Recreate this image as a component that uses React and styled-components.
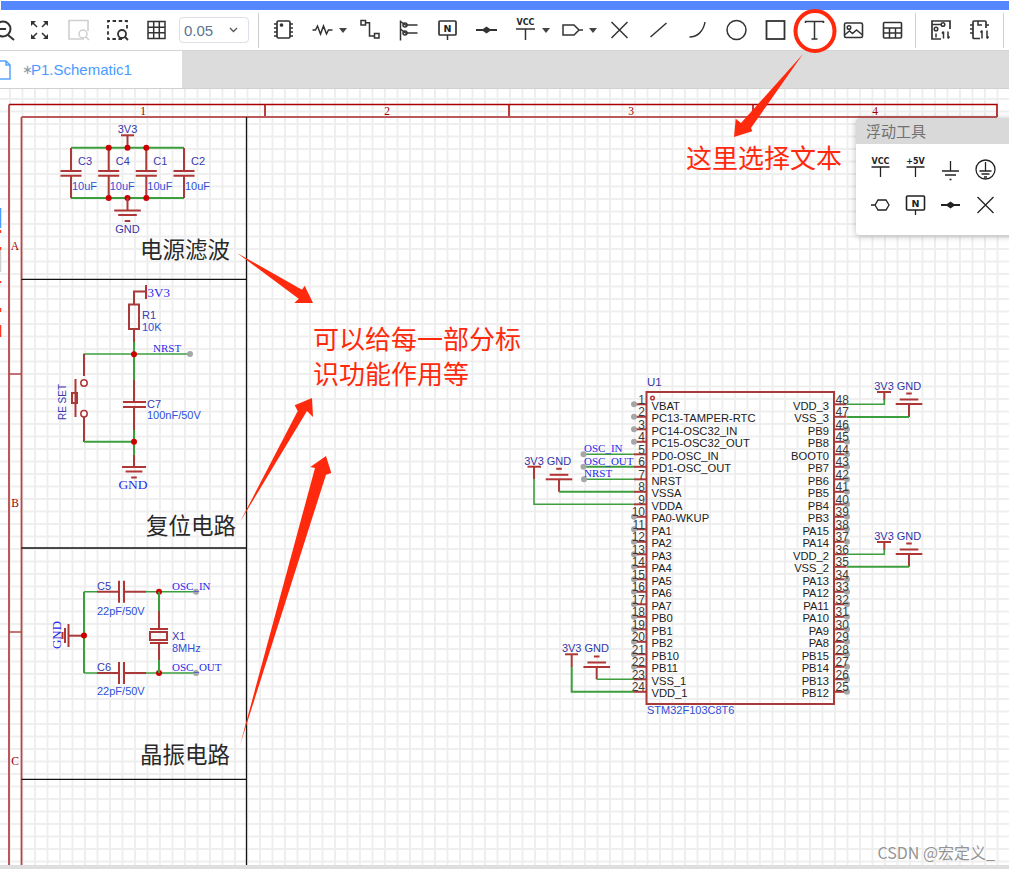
import React from "react";
import styled, { createGlobalStyle } from "styled-components";

const GlobalStyle = createGlobalStyle`
  html, body { margin: 0; padding: 0; background: #fff; }
  body { font-family: "Liberation Sans", "Noto Sans CJK SC", sans-serif; }
`;

const SANS = `"Liberation Sans", "Noto Sans CJK SC", sans-serif`;
const CJK = `"Noto Sans CJK SC", "Liberation Sans", sans-serif`;
const SERIF = `"Liberation Serif", serif`;

const LEFT_PINS = [
  "VBAT", "PC13-TAMPER-RTC", "PC14-OSC32_IN", "PC15-OSC32_OUT", "PD0-OSC_IN", "PD1-OSC_OUT",
  "NRST", "VSSA", "VDDA", "PA0-WKUP", "PA1", "PA2", "PA3", "PA4", "PA5", "PA6", "PA7",
  "PB0", "PB1", "PB2", "PB10", "PB11", "VSS_1", "VDD_1",
];
const RIGHT_PINS = [
  "VDD_3", "VSS_3", "PB9", "PB8", "BOOT0", "PB7", "PB6", "PB5", "PB4", "PB3", "PA15", "PA14",
  "VDD_2", "VSS_2", "PA13", "PA12", "PA11", "PA10", "PA9", "PA8", "PB15", "PB14", "PB13", "PB12",
];
const LEFT_WIRED = [5, 6, 7, 8, 9, 23, 24];
const RIGHT_WIRED = [48, 47, 36, 35];
const pinY = (i) => 404.3 + 12.5 * i;

const Page = styled.div`
  position: relative;
  width: 1009px;
  height: 869px;
  overflow: hidden;
  display: flex;
  flex-direction: column;
  background: #fff;
`;
const BlueBar = styled.div`
  height: 9px;
  margin: 1px 0 0 1px;
  background: #5588ff;
  flex: none;
`;
const Toolbar = styled.div`
  height: 40px;
  flex: none;
  display: flex;
  align-items: center;
  margin-left: -19.5px;
  border-bottom: 1px solid #d4d4d4;
  background: #fff;
`;
const Tool = styled.div`
  width: ${(p) => (p.$drop ? 47 : 39)}px;
  height: 40px;
  flex: none;
  display: flex;
  align-items: center;
`;
const ToolIcon = styled.svg`
  width: 39px;
  height: 26px;
  flex: none;
  fill: none;
  stroke: ${(p) => p.$color || "#333"};
  stroke-width: 1.5;
`;
const Caret = styled.span`
  width: 0;
  height: 0;
  margin-left: -3px;
  border-left: 4.5px solid transparent;
  border-right: 4.5px solid transparent;
  border-top: 5px solid #444;
`;
const SelectBox = styled.div`
  width: 70px;
  height: 26px;
  flex: none;
  margin-left: 3.5px;
  box-sizing: border-box;
  border: 1px solid #dcdfe6;
  border-radius: 4px;
  display: flex;
  align-items: center;
  justify-content: space-between;
  padding: 0 10px 0 4px;
  font-size: 15px;
  color: #5c7590;
`;
const Chevron = styled.svg`
  width: 9px;
  height: 6px;
  fill: none;
  stroke: #555;
  stroke-width: 1.3;
`;
const Divider = styled.div`
  width: 1px;
  height: 35px;
  flex: none;
  background: #cfcfcf;
  margin-left: ${(p) => p.$left}px;
  margin-right: ${(p) => p.$right}px;
`;
const TabBar = styled.div`
  height: 38px;
  flex: none;
  display: flex;
  background: #dcdcdc;
  border-bottom: 1px solid #d0d0d0;
  box-sizing: border-box;
`;
const Tab = styled.div`
  width: 182px;
  background: #fff;
  display: flex;
  align-items: center;
  font-size: 15px;
  color: #4a9bff;
`;
const DocIcon = styled.svg`
  width: 14px;
  height: 20px;
  margin-left: -3px;
  margin-right: 11px;
  fill: none;
  stroke: #55a5ff;
  stroke-width: 1.5;
`;
const Star = styled.span`
  width: 9px;
  color: #8a9aa8;
  font-family: "DejaVu Sans", sans-serif;
  font-size: 13px;
`;
const Canvas = styled.div`
  position: relative;
  flex: 1;
  overflow: hidden;
  background-color: #fff;
  background-image:
    linear-gradient(#eeeeee 2px, transparent 2px),
    linear-gradient(90deg, #eeeeee 2px, transparent 2px);
  background-size: 12.5px 12.5px;
  background-position: 9px 9px;
`;
const BottomStrip = styled.div`
  height: 4px;
  flex: none;
  background: #dedede;
`;
const Sheet = styled.svg`
  position: absolute;
  left: 0;
  top: 0;
  width: 1009px;
  height: 776px;
  font-family: ${SANS};
`;
const Overlay = styled.svg`
  position: absolute;
  left: 0;
  top: 0;
  width: 1009px;
  height: 869px;
  pointer-events: none;
`;

const Line = styled.path`
  fill: none;
  stroke: ${(p) => p.$c || "#a83a3a"};
  stroke-width: ${(p) => p.$w || 2};
`;
const Wire = styled.path`
  fill: none;
  stroke: #3d9e3d;
  stroke-width: ${(p) => p.$w || 1.6};
`;
const Plate = styled.path`
  fill: none;
  stroke: #b03636;
  stroke-width: 2;
`;
const Frame = styled.path`
  fill: none;
  stroke: ${(p) => p.$c || "#a80000"};
  stroke-width: ${(p) => p.$w || 1.5};
`;
const Body = styled.rect`
  fill: none;
  stroke: #a83a3a;
  stroke-width: 2;
`;
const Joint = styled.circle`
  fill: #cc0000;
`;
const PinEnd = styled.circle`
  fill: #a6a6a6;
`;
const Ring = styled.circle`
  fill: #fff;
  stroke: #b03636;
  stroke-width: 1.5;
`;
const Label = styled.text`
  fill: ${(p) => p.$c || "#2f50d8"};
  font-family: ${(p) => (p.$serif ? SERIF : SANS)};
  font-size: ${(p) => p.$s || 11}px;
  text-anchor: ${(p) => p.$anchor || "start"};
`;
const PinNum = styled.text`
  fill: #3a3a3a;
  font-size: 12px;
  text-anchor: ${(p) => p.$anchor};
`;
const PinName = styled.text`
  fill: #222;
  font-size: 11.2px;
  text-anchor: ${(p) => p.$anchor};
`;
const RulerText = styled.text`
  fill: #a00000;
  font-family: ${SERIF};
  font-size: 11.5px;
  text-anchor: middle;
`;

const Annotation = styled.div`
  position: absolute;
  left: ${(p) => p.$x}px;
  top: ${(p) => p.$y}px;
  font-family: ${CJK};
  font-size: ${(p) => p.$s}px;
  line-height: 35px;
  color: ${(p) => p.$c};
  white-space: nowrap;
`;
const FloatPanel = styled.div`
  position: absolute;
  left: 856px;
  top: 118px;
  width: 165px;
  height: 117px;
  background: #fff;
  border-radius: 4px;
  overflow: hidden;
  box-shadow: 0 1px 7px rgba(0, 0, 0, 0.28);
`;
const PanelHead = styled.div`
  height: 26px;
  padding-left: 10px;
  background: #d9d9d9;
  color: #707070;
  font-family: ${CJK};
  font-size: 15px;
  line-height: 26px;
`;
const PanelGrid = styled.div`
  display: grid;
  grid-template-columns: repeat(4, 35px);
  grid-auto-rows: 34px;
  padding: 10px 0 0 7px;
`;
const PanelIcon = styled.svg`
  width: 35px;
  height: 34px;
  fill: none;
  stroke: #222;
  stroke-width: 1.3;
`;
const IconText = styled.text`
  fill: #222;
  stroke: none;
  font-family: "DejaVu Sans", sans-serif;
  font-size: ${(p) => p.$s || 8}px;
  font-weight: 700;
  text-anchor: middle;
`;
const Watermark = styled.div`
  position: absolute;
  right: 14px;
  top: 842px;
  font-family: ${CJK};
  font-size: 16px;
  line-height: 20px;
  color: rgba(120, 120, 120, 0.8);
`;

// one ground symbol, plates getting shorter away from the lead
function Ground({ x, y, dir = 1, wide = 13.3 }) {
  return (
    <>
      <Plate d={`M${x - wide} ${y}H${x + wide}`} />
      <Plate d={`M${x - wide * 0.7} ${y + 4.5 * dir}H${x + wide * 0.7}`} />
      <Plate d={`M${x - 2.8} ${y + 10.5 * dir}H${x + 2.8}`} />
    </>
  );
}

function PowerPair({ baseY, pinA, pinB }) {
  return (
    <>
      <Label x={884} y={baseY - 2.5} $c="#3535a8" $anchor="middle">3V3</Label>
      <Label x={909} y={baseY - 2.5} $c="#3535a8" $anchor="middle">GND</Label>
      <Plate d={`M877 ${baseY}H891`} />
      <Line d={`M884.3 ${baseY}V${pinA - 4}`} />
      <Wire d={`M847 ${pinA}H884.3V${pinA - 5}`} />
      <Ground x={909} y={baseY + 12} dir={-1} />
      <Line d={`M909 ${baseY + 12}V${pinB}`} />
      <Wire d={`M847 ${pinB}H909`} $w={2} />
    </>
  );
}

function FilterBlock() {
  const caps = [
    { x: 71, name: "C3" },
    { x: 108.7, name: "C4" },
    { x: 146.3, name: "C1" },
    { x: 184, name: "C2" },
  ];
  return (
    <>
      <Label x={127.5} y={133} $c="#3535a8" $anchor="middle">3V3</Label>
      <Plate d="M121 135.3H134" />
      <Line d="M127.5 135V148" />
      <Wire d="M71 147.7H184M71 198H184" $w={2} />
      {caps.map((c) => (
        <g key={c.name}>
          <Line d={`M${c.x} 148V171M${c.x} 175.7V198`} />
          <Plate d={`M${c.x - 10.5} 171H${c.x + 10.5}M${c.x - 10.5} 175.7H${c.x + 10.5}`} />
          <Label x={c.x + 7} y={165} $c="#3a3ab0">{c.name}</Label>
          <Label x={c.x + 1} y={190}>10uF</Label>
        </g>
      ))}
      {[108.7, 127.5, 146.3].map((x) => (
        <g key={x}>
          <Joint cx={x} cy={147.7} r={3} />
          <Joint cx={x} cy={198} r={3} />
        </g>
      ))}
      <Line d="M127.5 198V210" />
      <Ground x={127.5} y={210.5} />
      <Label x={127.5} y={233} $c="#3535a8" $anchor="middle">GND</Label>
    </>
  );
}

function ResetBlock() {
  return (
    <>
      <Label x={147.5} y={297} $serif $s={13} $c="#2a2ae8">3V3</Label>
      <Plate d="M146 285V299" />
      <Line d="M146 291.5H134V304" />
      <Body x={129} y={304.5} width={10} height={24.5} />
      <Label x={142} y={319} $c="#3a3ab0">R1</Label>
      <Label x={142} y={331}>10K</Label>
      <Line d="M134 329V343" />
      <Wire d="M134 342V380" $w={2} />
      <Wire d="M83.5 354H190" />
      <Line d="M84 354V376" />
      <Joint cx={134} cy={354.3} r={3} />
      <PinEnd cx={190} cy={354} r={3} />
      <Label x={153} y={352} $serif $c="#2a2ae8">NRST</Label>
      <Line d="M134 380V402M134 407V430" />
      <Plate d="M123 402H146M123 407H146" />
      <Wire d="M134 430V455" $w={2} />
      <Line d="M134 455V467" />
      <Label x={147} y={408} $c="#3a3ab0">C7</Label>
      <Label x={147} y={419}>100nF/50V</Label>
      <Ring cx={84} cy={383} r={3.2} />
      <Ring cx={84} cy={413.7} r={3.2} />
      <Plate d="M75.5 379V417" />
      <Body x={72} y={393} width={5} height={10} />
      <Line d="M84 417V442" />
      <Wire d="M84 441.7H134" $w={2} />
      <Joint cx={134} cy={441.7} r={3} />
      <Ground x={134} y={467} wide={12} />
      <Label x={133} y={489} $serif $s={13.5} $c="#2a2ae8" $anchor="middle">GND</Label>
      <Label transform="translate(66 402) rotate(-90)" $s={10} $c="#3a3ab0" $anchor="middle">RE SET</Label>
    </>
  );
}

function CrystalBlock() {
  const rows = [
    { y: 591.7, cap: "C5", net: "OSC_IN", capY: 590, valY: 615 },
    { y: 673, cap: "C6", net: "OSC_OUT", capY: 671, valY: 695 },
  ];
  return (
    <>
      <Wire d="M84 591.7V673" $w={2} />
      {rows.map((r) => (
        <g key={r.cap}>
          <Wire d={`M84 ${r.y}H97M146 ${r.y}H196`} />
          <Line d={`M97 ${r.y}H119M124 ${r.y}H146`} />
          <Plate d={`M119 ${r.y - 11}V${r.y + 11}M124 ${r.y - 11}V${r.y + 11}`} />
          <Joint cx={159} cy={r.y} r={3} />
          <PinEnd cx={196} cy={r.y} r={3} />
          <Label x={97} y={r.capY} $c="#3a3ab0">{r.cap}</Label>
          <Label x={97} y={r.valY}>22pF/50V</Label>
          <Label x={172} y={r.y - 2} $serif $c="#2a2ae8">{r.net}</Label>
        </g>
      ))}
      <Wire d="M159 591.7V611M159 660V673" $w={2} />
      <Line d="M159 611V629M159 643V660" />
      <Plate d="M150 629H168M150 643H168" />
      <Body x={150} y={632} width={17} height={8} />
      <Label x={172} y={640} $c="#3a3ab0">X1</Label>
      <Label x={172} y={652}>8MHz</Label>
      <Line d="M68 635.7H84" />
      <Joint cx={84} cy={635.5} r={3} />
      <Plate d="M68.5 624V647M65 628V643M62.5 632V639" />
      <Label transform="translate(61 635) rotate(-90)" $serif $s={13} $c="#2a2ae8" $anchor="middle">GND</Label>
    </>
  );
}

function ChipBlock() {
  return (
    <>
      <Body x={646.5} y={392} width={187.5} height={312} />
      <Line d="M646.5 392H834" />
      <Ring cx={652.5} cy={398} r={1.8} />
      <Label x={647} y={386} $s={11.5} $c="#3535a8">U1</Label>
      <Label x={647} y={714}>STM32F103C8T6</Label>
      {LEFT_PINS.map((name, i) => (
        <g key={name}>
          <Line d={`M634 ${pinY(i)}H646.5`} />
          {!LEFT_WIRED.includes(i + 1) && <PinEnd cx={634} cy={pinY(i)} r={3} />}
          <PinNum x={645} y={pinY(i) - 0.5} $anchor="end">{i + 1}</PinNum>
          <PinName x={651.5} y={pinY(i) + 5.2} $anchor="start">{name}</PinName>
        </g>
      ))}
      {RIGHT_PINS.map((name, i) => (
        <g key={name}>
          <Line d={`M834 ${pinY(i)}H846.5`} />
          {!RIGHT_WIRED.includes(48 - i) && <PinEnd cx={847} cy={pinY(i)} r={3} />}
          <PinNum x={835.5} y={pinY(i) - 0.5} $anchor="start">{48 - i}</PinNum>
          <PinName x={829} y={pinY(i) + 5.2} $anchor="end">{name}</PinName>
        </g>
      ))}

      <Wire d="M583.5 454.3H634" />
      <Wire d="M583.5 466.8H634" $w={2} />
      <Wire d="M583.5 479.3H634" />
      <PinEnd cx={583.5} cy={454.3} r={3} />
      <PinEnd cx={583.5} cy={466.8} r={3} />
      <PinEnd cx={584} cy={479.3} r={3} />
      <Label x={584} y={452} $serif $c="#2a2ae8">OSC_IN</Label>
      <Label x={584} y={465} $serif $c="#2a2ae8">OSC_OUT</Label>
      <Label x={584} y={477} $serif $c="#2a2ae8">NRST</Label>

      <Label x={534} y={465} $c="#3535a8" $anchor="middle">3V3</Label>
      <Label x={559} y={465} $c="#3535a8" $anchor="middle">GND</Label>
      <Plate d="M527.5 466.7H541" />
      <Line d="M534 467V479" />
      <Wire d="M534 479V504.3H634" />
      <Ground x={559} y={479.3} dir={-1} />
      <Line d="M559 479.3V491.8" />
      <Wire d="M559 491.8H634" $w={2} />

      <Label x={571.7} y={652} $c="#3535a8" $anchor="middle">3V3</Label>
      <Label x={596.7} y={652} $c="#3535a8" $anchor="middle">GND</Label>
      <Plate d="M565 654.3H578" />
      <Line d="M571.7 654V667" />
      <Wire d="M571.7 667V691.8H634" $w={2} />
      <Ground x={596.7} y={667} dir={-1} />
      <Line d="M596.7 667V679.3" />
      <Wire d="M596.7 679.3H634" />

      <PowerPair baseY={392} pinA={404.3} pinB={417} />
      <PowerPair baseY={542} pinA={554.3} pinB={566.8} />
    </>
  );
}

function Tools() {
  return (
    <>
      <Tool>
        <ToolIcon viewBox="0 0 39 26">
          <circle cx="22" cy="12" r="7.5" strokeWidth="2" />
          <path d="M27 18l6 5M17 12h8" strokeWidth="2" />
        </ToolIcon>
      </Tool>
      <Tool>
        <ToolIcon viewBox="0 0 39 26" strokeWidth="1.6">
          <path d="M12 5l5 5M27 5l-5 5M12 21l5-5M27 21l-5-5" />
          <path d="M11 4h5l-5 5zM28 4h-5l5 5zM11 22h5l-5-5zM28 22h-5l5-5z" fill="#333" stroke="none" />
        </ToolIcon>
      </Tool>
      <Tool>
        <ToolIcon viewBox="0 0 39 26" $color="#cfcfcf">
          <path d="M25 22H10V3.5H29V14" strokeWidth="1.6" />
          <circle cx="24" cy="17" r="4" />
          <path d="M27 20l3 3" />
        </ToolIcon>
      </Tool>
      <Tool>
        <ToolIcon viewBox="0 0 39 26">
          <path d="M24 22H10V4H29V13" strokeWidth="1.8" strokeDasharray="3.5 2.6" />
          <circle cx="24" cy="17" r="4" strokeWidth="1.8" />
          <path d="M27 20l3 3" strokeWidth="1.8" />
        </ToolIcon>
      </Tool>
      <Tool>
        <ToolIcon viewBox="0 0 39 26" strokeWidth="1.8">
          <rect x="11" y="4.5" width="17" height="17" />
          <path d="M16.7 4.5v17M22.3 4.5v17M11 10.2h17M11 15.8h17" />
        </ToolIcon>
      </Tool>
      <SelectBox>
        0.05
        <Chevron viewBox="0 0 9 6"><path d="M1 1l3.5 3.5L8 1" /></Chevron>
      </SelectBox>
      <Divider $left={8.5} $right={5} />
      <Tool>
        <ToolIcon viewBox="0 0 39 26">
          <rect x="13" y="4" width="13" height="17" rx="1.5" strokeWidth="1.7" />
          <circle cx="17.5" cy="8" r="1.1" fill="#333" />
          <path d="M10 7h3M10 11h3M10 15h3M10 19h3M26 7h3M26 11h3M26 15h3M26 19h3" />
        </ToolIcon>
      </Tool>
      <Tool $drop>
        <ToolIcon viewBox="0 0 39 26">
          <path d="M9.5 13h3l2-4 3 8 3-8 3 8 2-4h4" />
        </ToolIcon>
        <Caret />
      </Tool>
      <Tool>
        <ToolIcon viewBox="0 0 39 26">
          <rect x="11" y="3.5" width="4.5" height="4.5" />
          <rect x="24.5" y="16.5" width="4.5" height="4.5" />
          <path d="M15.5 5.7h4V19h5" />
        </ToolIcon>
      </Tool>
      <Tool>
        <ToolIcon viewBox="0 0 39 26">
          <path d="M11.5 3.5v20M11.5 4.5l5 3.5h12M11.5 12l5 4h12" />
          <circle cx="16" cy="8" r="2" />
          <circle cx="16" cy="16" r="2" />
        </ToolIcon>
      </Tool>
      <Tool>
        <ToolIcon viewBox="0 0 39 26">
          <rect x="11" y="4" width="17" height="14" rx="1" strokeWidth="1.7" />
          <path d="M19.5 18v5" />
          <IconText x="19.5" y="14.5" $s={9.5}>N</IconText>
        </ToolIcon>
      </Tool>
      <Tool>
        <ToolIcon viewBox="0 0 39 26">
          <path d="M9 13h21" strokeWidth="2" />
          <path d="M14.5 13l5-3.5 5 3.5-5 3.5z" fill="#333" stroke="none" />
        </ToolIcon>
      </Tool>
      <Tool $drop>
        <ToolIcon viewBox="0 0 39 26">
          <IconText x="19.5" y="8" $s={8}>VCC</IconText>
          <path d="M10 12h19M19.5 12v11" />
        </ToolIcon>
        <Caret />
      </Tool>
      <Tool $drop>
        <ToolIcon viewBox="0 0 39 26">
          <path d="M10 8h11l5 5-5 5H10zM26 13h4" />
        </ToolIcon>
        <Caret />
      </Tool>
      <Tool>
        <ToolIcon viewBox="0 0 39 26"><path d="M11.5 5l16 16M27.5 5l-16 16" /></ToolIcon>
      </Tool>
      <Tool>
        <ToolIcon viewBox="0 0 39 26"><path d="M11.5 20L27.5 6" /></ToolIcon>
      </Tool>
      <Tool>
        <ToolIcon viewBox="0 0 39 26"><path d="M11.5 20c8 0 14-6 15.5-15" /></ToolIcon>
      </Tool>
      <Tool>
        <ToolIcon viewBox="0 0 39 26"><circle cx="19.5" cy="13" r="9.5" /></ToolIcon>
      </Tool>
      <Tool>
        <ToolIcon viewBox="0 0 39 26"><rect x="10.5" y="4" width="18" height="18" strokeWidth="1.8" /></ToolIcon>
      </Tool>
      <Tool>
        <ToolIcon viewBox="0 0 39 26">
          <path d="M10.5 6V4.5h18V6M19.5 4.5V22M16.5 22h6" />
        </ToolIcon>
      </Tool>
      <Tool>
        <ToolIcon viewBox="0 0 39 26">
          <rect x="10.5" y="6" width="18" height="14.5" rx="1.5" strokeWidth="1.6" />
          <circle cx="15" cy="10.5" r="1.8" />
          <path d="M10.5 18l5-4 3 2.5 4-3.5 6 5" />
        </ToolIcon>
      </Tool>
      <Tool>
        <ToolIcon viewBox="0 0 39 26">
          <rect x="10.5" y="5.5" width="18" height="15.500" rx="1" strokeWidth="1.6" />
          <path d="M10.5 11h18M10.5 16h18M16.5 11v10M22.5 11v10" />
        </ToolIcon>
      </Tool>
      <Divider $left={3} $right={5.5} />
      <Tool>
        <ToolIcon viewBox="0 0 39 26">
          <path d="M20 22h-9V4h18v8" strokeWidth="1.7" />
          <circle cx="22" cy="7.5" r="1.8" />
          <path d="M11 7.5h9" />
          <circle cx="15" cy="12" r="1.8" />
          <path d="M15 16.5v4M22.5 14.5v7M22.5 14.5l-1.500 2M27 21.500v-7M27 21.500l1.500-2" />
        </ToolIcon>
      </Tool>
      <Tool>
        <ToolIcon viewBox="0 0 39 26">
          <path d="M20 21.500h-6a1 1 0 0 1-1-1V5a1 1 0 0 1 1-1h11a1 1 0 0 1 1 1v6" strokeWidth="1.7" />
          <path d="M10 8h3M10 12h3M10 16h3M26 8h3M18 4v4h4" />
          <path d="M22 13.500v8M22 13.500l-1.500 2M27 21.500v-8M27 21.500l1.500-2" />
        </ToolIcon>
      </Tool>
      <Divider $left={4} $right={0} />
    </>
  );
}

function PanelTools() {
  return (
    <PanelGrid>
      <PanelIcon viewBox="0 0 35 34">
        <IconText x="17.5" y="10" $s={8}>VCC</IconText>
        <path d="M8.5 13h18M17.5 13v10" />
      </PanelIcon>
      <PanelIcon viewBox="0 0 35 34">
        <IconText x="17.5" y="10" $s={8}>+5V</IconText>
        <path d="M8.5 13h18M17.5 13v10" />
      </PanelIcon>
      <PanelIcon viewBox="0 0 35 34">
        <path d="M17.5 7v10M9 17h17M12 21h11M16.5 25.500h2" />
      </PanelIcon>
      <PanelIcon viewBox="0 0 35 34">
        <circle cx="17.5" cy="15.5" r="9.5" />
        <path d="M17.5 8v9M11.5 17h12M13.5 20h8M16 23h3" />
      </PanelIcon>
      <PanelIcon viewBox="0 0 35 34">
        <path d="M8 17h4l3-5h8l3 5-3 5h-8l-3-5" />
      </PanelIcon>
      <PanelIcon viewBox="0 0 35 34">
        <rect x="8.5" y="8" width="18" height="14" rx="1" strokeWidth="1.6" />
        <path d="M17.5 22v5" />
        <IconText x="17.5" y="18.5" $s={9.5}>N</IconText>
      </PanelIcon>
      <PanelIcon viewBox="0 0 35 34">
        <path d="M8 17h19" strokeWidth="1.8" />
        <path d="M12.5 17l5-3.500 5 3.500-5 3.500z" fill="#222" stroke="none" />
      </PanelIcon>
      <PanelIcon viewBox="0 0 35 34">
        <path d="M9.5 9l16 16M25.5 9l-16 16" />
      </PanelIcon>
    </PanelGrid>
  );
}

export default function App() {
  return (
    <Page>
      <GlobalStyle />
      <BlueBar />
      <Toolbar>
        <Tools />
      </Toolbar>
      <TabBar>
        <Tab>
          <DocIcon viewBox="0 0 14 20">
            <path d="M1 1h8l4 4v14H1zM9 1v4h4" />
          </DocIcon>
          <Star>∗</Star>
          P1.Schematic1
        </Tab>
      </TabBar>
      <Canvas>
        <Sheet viewBox="0 89 1009 776">
          <path d="M0.5 208V228" stroke="#4a9bff" strokeWidth="1.5" />
          <path d="M0.5 230V233M0.5 247V250M0.5 281V283M0.5 308V312M0.5 325V337" stroke="#ff3a20" strokeWidth="1.5" />
          <path d="M0.5 250V272" stroke="#cfcfcf" strokeWidth="1.5" />
          <Frame d="M9 104.5H997V117" />
          <Frame d="M265 104.5V117M509 104.5V117M753 104.5V117" />
          <Frame d="M9 104.5V865M21.5 117V865" $c="#b5474a" $w={1.8} />
          <Frame d="M21.5 117H997" $c="#bb5a5c" $w={1.8} />
          <Frame d="M9 374H21.5M9 632H21.5" $c="#b5474a" />
          <Frame d="M246.5 117V865M21.5 279.3H246.5M21.5 548H246.5M21.5 779.3H246.5" $c="#111" $w={1.3} />
          {[["1", 143], ["2", 387], ["3", 631], ["4", 875]].map(([n, x]) => (
            <RulerText key={n} x={x} y={114.5}>{n}</RulerText>
          ))}
          {[["A", 250], ["B", 507], ["C", 765]].map(([n, y]) => (
            <RulerText key={n} x={15} y={y}>{n}</RulerText>
          ))}
          <FilterBlock />
          <ResetBlock />
          <CrystalBlock />
          <ChipBlock />
        </Sheet>
      </Canvas>
      <BottomStrip />

      <FloatPanel>
        <PanelHead>浮动工具</PanelHead>
        <PanelTools />
      </FloatPanel>

      <Annotation $x={140} $y={231} $s={22.5} $c="#2a2a2a">电源滤波</Annotation>
      <Annotation $x={146} $y={507} $s={22.5} $c="#2a2a2a">复位电路</Annotation>
      <Annotation $x={140} $y={736} $s={22.5} $c="#2a2a2a">晶振电路</Annotation>
      <Annotation $x={313} $y={320} $s={26} $c="#ff2a0d">可以给每一部分标</Annotation>
      <Annotation $x={313} $y={355} $s={26} $c="#ff2a0d">识功能作用等</Annotation>
      <Annotation $x={686} $y={139} $s={26} $c="#ff2a0d">这里选择文本</Annotation>

      <Overlay viewBox="0 0 1009 869">
        <ellipse cx="815" cy="31" rx="19.5" ry="20" fill="none" stroke="#ff2a0d" strokeWidth="4" />
        <g fill="#ff2a0d">
          <polygon points="803,54 751,128 752.3,131.3 734,137 735.7,118.7 741,123" />
          <polygon points="237,253 302,289.7 304.7,285.7 313,303 294.3,303 298.7,298.7" />
          <polygon points="240,522 297.7,411 294.7,405.3 312,398 313,417 307,411" />
          <polygon points="240,745 315,468 310.3,467 326,456 331.3,473 326,474.7" />
        </g>
      </Overlay>

      <Watermark>CSDN @宏定义_</Watermark>
    </Page>
  );
}
